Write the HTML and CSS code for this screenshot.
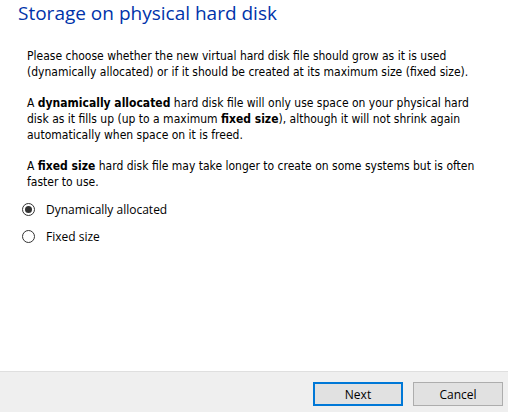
FILE: index.html
```html
<!DOCTYPE html>
<html>
<head>
<meta charset="utf-8">
<link rel="stylesheet" href="styles.css">
</head>
<body>
<div class="page">
  <main class="content">
    <h1 class="title">Storage on physical hard disk</h1>
    <div class="text">
      <p>Please choose whether the new virtual hard disk file should grow as it is used<br>(dynamically allocated) or if it should be created at its maximum size (fixed size).</p>
      <p>A <b>dynamically allocated</b> hard disk file will only use space on your physical hard<br>disk as it fills up (up to a maximum <b>fixed size</b>), although it will not shrink again<br>automatically when space on it is freed.</p>
      <p>A <b>fixed size</b> hard disk file may take longer to create on some systems but is often<br>faster to use.</p>
    </div>
    <div class="options">
      <label class="option"><span class="radio checked"></span><span>Dynamically allocated</span></label>
      <label class="option"><span class="radio"></span><span>Fixed size</span></label>
    </div>
  </main>
  <footer class="footer">
    <button class="btn default">Next</button>
    <button class="btn">Cancel</button>
  </footer>
</div>
</body>
</html>
```

FILE: styles.css
```css
html, body {
  margin: 0;
  padding: 0;
  background: #ffffff;
}
.page {
  width: 508px;
  height: 412px;
  display: flex;
  flex-direction: column;
}
.content {
  flex: 1;
  padding: 0 0 0 18px;
}
.title {
  margin: 0;
  padding-top: 0;
  font-family: "Open Sans", "Noto Sans", sans-serif;
  font-weight: 400;
  font-size: 19px;
  line-height: 26px;
  color: #0033aa;
}
.text {
  margin-top: 22px;
  padding-left: 9px;
  font-family: "DejaVu Sans", sans-serif;
  font-stretch: condensed;
  font-size: 12px;
  line-height: 16px;
  color: #000;
  white-space: nowrap;
}
.text p {
  margin: 0 0 15px 0;
}
.text p:last-child {
  margin-bottom: 0;
}
.options {
  margin-top: 12px;
  display: flex;
  flex-direction: column;
  gap: 12px;
  padding-left: 4px;
}
.option {
  display: flex;
  align-items: center;
  gap: 11px;
  font-family: "Open Sans", "Noto Sans", sans-serif;
  font-size: 12px;
  line-height: 15px;
  color: #000;
}
.radio {
  width: 13px;
  height: 13px;
  box-sizing: border-box;
  border: 1px solid #333;
  border-radius: 50%;
  background: #fff;
  position: relative;
}
.radio.checked::after {
  content: "";
  position: absolute;
  left: 2px;
  top: 2px;
  width: 7px;
  height: 7px;
  border-radius: 50%;
  background: #333;
}
.footer {
  height: 41px;
  box-sizing: border-box;
  border-top: 1px solid #dfdfdf;
  background: #efefef;
  display: flex;
  justify-content: flex-end;
  align-items: flex-start;
  gap: 10px;
  padding: 10px 5px 0 0;
}
.btn {
  width: 90px;
  height: 24px;
  box-sizing: border-box;
  background: #e1e1e1;
  border: 1px solid #adadad;
  font-family: "Open Sans", "Noto Sans", sans-serif;
  font-size: 12px;
  color: #000;
  padding: 0;
  margin: 0;
}
.btn.default {
  border: 2px solid #0078d7;
}
```
